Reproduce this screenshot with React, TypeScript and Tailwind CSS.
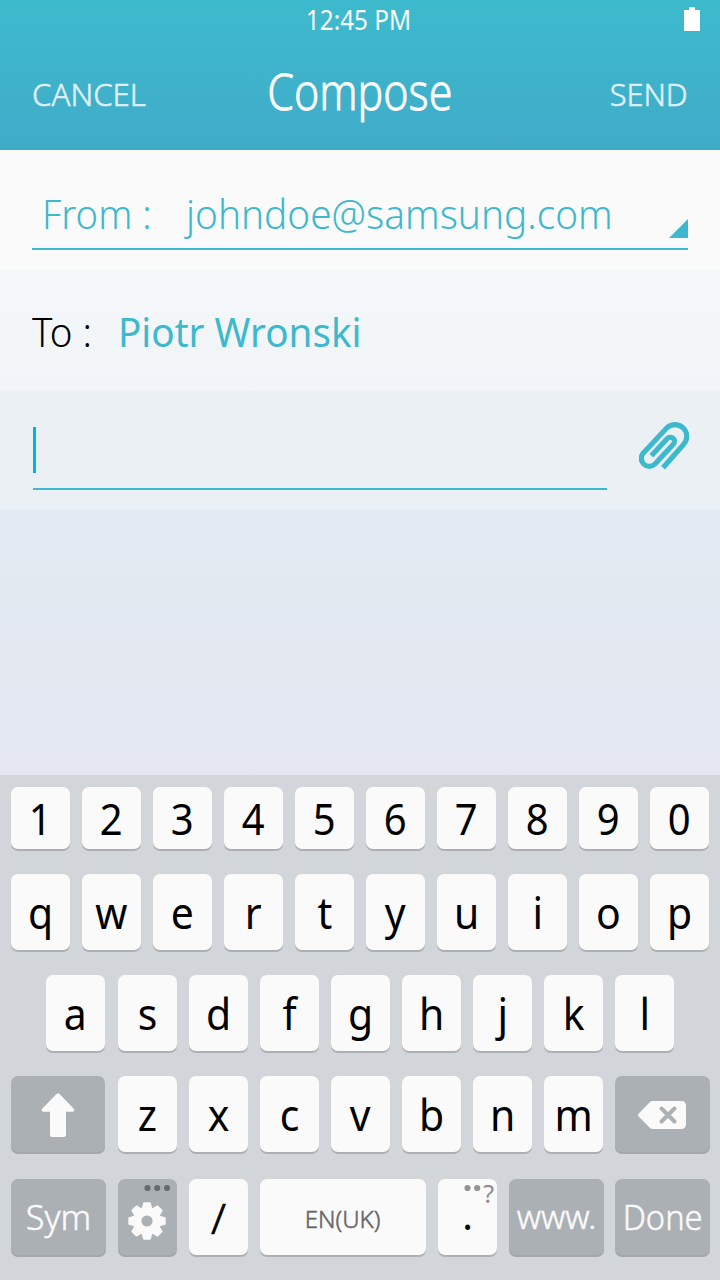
import type { ReactNode } from 'react';

function Key({ children, className = 'w-[59px]', dark = false }: { children?: ReactNode; className?: string; dark?: boolean }) {
  const tone = dark
    ? 'bg-[#abb0b4] text-[#fafafa] shadow-[0_2px_0_#a2a7ab]'
    : 'bg-[#fafafa] text-black shadow-[0_2px_0_#acafb4]';
  return (
    <button className={`relative flex h-full shrink-0 items-center justify-center rounded-[7px] whitespace-nowrap ${tone} ${className}`}>
      {children}
    </button>
  );
}

function Glyph({ children }: { children: string }) {
  return <span className="scale-x-[0.93]">{children}</span>;
}

function Paperclip() {
  return (
    <svg className="h-[48px] w-[50px]" viewBox="117 95 150 144" fill="none" stroke="#3db8cc" strokeWidth="15.5">
      <path d="M189 232 L250 163 A35 35 0 0 0 200 113 L131 187 A24 24 0 0 0 165 221 L220 161.500 A12 12 0 0 0 202 144.500 L154 196" />
    </svg>
  );
}

function Gear() {
  const turns = [0, 45, 90, 135, 180, 225, 270, 315];
  return (
    <svg className="mt-2 mr-[2px] h-[38px] w-[38px]" viewBox="-19 -19 38 38">
      {turns.map((turn) => (
        <path key={turn} d="M-5.500 -12 L-3.800 -18 Q-3.600 -18.700 -2.900 -18.700 H2.900 Q3.600 -18.700 3.800 -18 L5.500 -12 Z" fill="#fafafa" transform={`rotate(${turn})`} />
      ))}
      <circle r="9.800" fill="none" stroke="#fafafa" strokeWidth="8.400" />
    </svg>
  );
}

export default function App() {
  return (
    <main className="flex h-[1280px] w-[720px] flex-col overflow-hidden bg-[#e4e9f1] font-['Noto_Sans',sans-serif]">
      <header className="flex h-[150px] shrink-0 flex-col bg-linear-to-b from-[#3dbacd] to-[#40abc9] text-[#fafafa]">
        <div className="relative flex h-[37px] items-center justify-center">
          <span className="mr-1 origin-center scale-x-[0.9] pt-[3px] text-[27px]">12:45 PM</span>
          <svg className="absolute top-[7px] right-5 h-6 w-4" viewBox="0 0 16 24" fill="#fff">
            <path d="M5 3 V1 Q5 0 6 0 H10 Q11 0 11 1 V3 H16 V24 H0 V3 Z" />
          </svg>
        </div>
        <nav className="grid h-[113px] grid-cols-3 items-center px-8">
          <span className="origin-left scale-x-[0.975] pt-px text-[32px] font-light text-[#dfeff4] [-webkit-text-stroke:0.6px]">CANCEL</span>
          <h1 className="flex justify-center pb-[5px] text-[49px] leading-none font-light whitespace-nowrap [-webkit-text-stroke:0.8px]">
            <span className="scale-x-[0.875]">Compose</span>
          </h1>
          <span className="origin-right scale-x-[0.96] pt-px text-right text-[32px] font-light text-[#dfeff4] [-webkit-text-stroke:0.6px]">SEND</span>
        </nav>
      </header>

      <section className="h-[120px] shrink-0 bg-[#fafafa] px-8">
        <div className="flex h-[100px] items-center border-b-2 border-[#3db8cc] pt-[30px] pl-[10px] text-[40px] font-light text-[#3db8cc]">
          <span className="w-[144px] shrink-0 origin-left scale-x-[0.955]">From :</span>
          <span className="grow origin-left scale-x-[0.969]">johndoe@samsung.com</span>
          <svg className="mb-[10px] h-[19px] w-[19px] self-end" viewBox="0 0 19 19" fill="#3db8cc">
            <path d="M19 0 V19 H0 Z" />
          </svg>
        </div>
      </section>

      <section className="flex h-[120px] shrink-0 items-center bg-linear-to-b from-[#f3f7f8] to-[#f1f5f9] px-8 pt-[3px] text-[40px]">
        <span className="w-[86px] origin-left scale-x-[0.965] font-light text-black">To :</span>
        <span className="origin-left scale-x-[0.965] text-[#3db8cc]">Piotr Wronski</span>
      </section>

      <section className="flex h-[120px] shrink-0 bg-[#ebf0f4] pr-[31px] pl-[33px]">
        <div className="h-[100px] w-[574px] border-b-2 border-[#3db8cc] pt-[37px]">
          <div className="h-[46px] w-[3px] bg-[#00b4e6]" />
        </div>
        <div className="ml-auto pt-[32px]"><Paperclip /></div>
      </section>

      <section className="grow bg-linear-to-b from-[#e2eaf2] to-[#e4e7f1]" />

      <section className="flex h-[505px] shrink-0 flex-col bg-[#d2d5da] px-[11px] pt-3 text-[44px]">
        <div className="flex h-[62px] gap-3 text-[43px]">
          {'1234567890'.split('').map((c) => <Key key={c} className="w-[59px] pt-[3px]"><Glyph>{c}</Glyph></Key>)}
        </div>
        <div className="mt-[25px] flex h-[76px] gap-3">
          {'qwertyuiop'.split('').map((c) => <Key key={c}><Glyph>{c}</Glyph></Key>)}
        </div>
        <div className="mt-[25px] flex h-[76px] pl-[35px]">
          <Key><Glyph>a</Glyph></Key>
          <div className="ml-[13px] flex gap-3">
            {'sdfghjkl'.split('').map((c) => <Key key={c}><Glyph>{c}</Glyph></Key>)}
          </div>
        </div>
        <div className="mt-[25px] flex h-[76px]">
          <Key dark className="w-[94px]">
            <svg className="mt-0.5 h-11 w-[34px]" viewBox="0 0 34 44" fill="#fafafa">
              <path d="M15.700 .8 Q17 -.4 18.300 .8 L32.800 15.800 Q34.300 18 32 18.700 H25 V42 Q25 44 23 44 H11 Q9 44 9 42 V18.700 H2 Q-.3 18 1.200 15.800 Z" />
            </svg>
          </Key>
          <div className="ml-[13px] flex gap-3">
            {'zxcvbnm'.split('').map((c) => <Key key={c}><Glyph>{c}</Glyph></Key>)}
            <Key dark className="w-[95px]">
              <svg className="mt-0.5 mr-px h-7 w-12" viewBox="0 0 48 28">
                <path d="M.5 12.800 L12 1 Q13 0 14.500 0 H43 Q48 0 48 5 V23 Q48 28 43 28 H14.500 Q13 28 12 27 L.5 15.200 Q-.5 14 .5 12.800 Z" fill="#fafafa" />
                <path d="M23.500 7.500 L36.500 20.500 M36.500 7.500 L23.500 20.500" stroke="#abb0b4" strokeWidth="4" strokeLinecap="round" />
              </svg>
            </Key>
          </div>
        </div>
        <div className="mt-[27px] flex h-[76px] gap-3">
          <Key dark className="w-[95px] text-[34px] font-light [-webkit-text-stroke:0.5px]"><span className="scale-x-[1.01] pt-px">Sym</span></Key>
          <Key dark>
            <Gear />
            <svg className="absolute top-[5px] right-[6px] h-2 w-[27px]" viewBox="0 0 27 8" fill="#686b6e">
              <circle cx="3.500" cy="4" r="3.100" /><circle cx="13.200" cy="4" r="3.100" /><circle cx="23" cy="4" r="3.100" />
            </svg>
          </Key>
          <Key className="w-[59px] font-light [-webkit-text-stroke:0.7px]"><span className="pt-0.5 text-[43px]">/</span></Key>
          <Key className="w-[166px]"><span className="scale-x-[0.98] pt-[5px] text-[24.5px] font-light text-[#666] [-webkit-text-stroke:0.5px]">EN(UK)</span></Key>
          <Key>
            <span className="pb-1 text-[40px]">.</span>
            <svg className="absolute top-[5px] left-[26px] h-2 w-[18px]" viewBox="0 0 18 8" fill="#949494">
              <circle cx="3.500" cy="4" r="3.100" /><circle cx="13.200" cy="4" r="3.100" />
            </svg>
            <span className="absolute top-[2px] right-[3px] text-[25px] leading-6 text-[#8c8c8c]">?</span>
          </Key>
          <Key dark className="w-[95px] text-[33px] font-light [-webkit-text-stroke:0.5px]">www.</Key>
          <Key dark className="-ml-px w-[95px] text-[34px] font-light [-webkit-text-stroke:0.5px]"><span className="scale-x-[0.96] pt-px">Done</span></Key>
        </div>
      </section>
    </main>
  );
}
